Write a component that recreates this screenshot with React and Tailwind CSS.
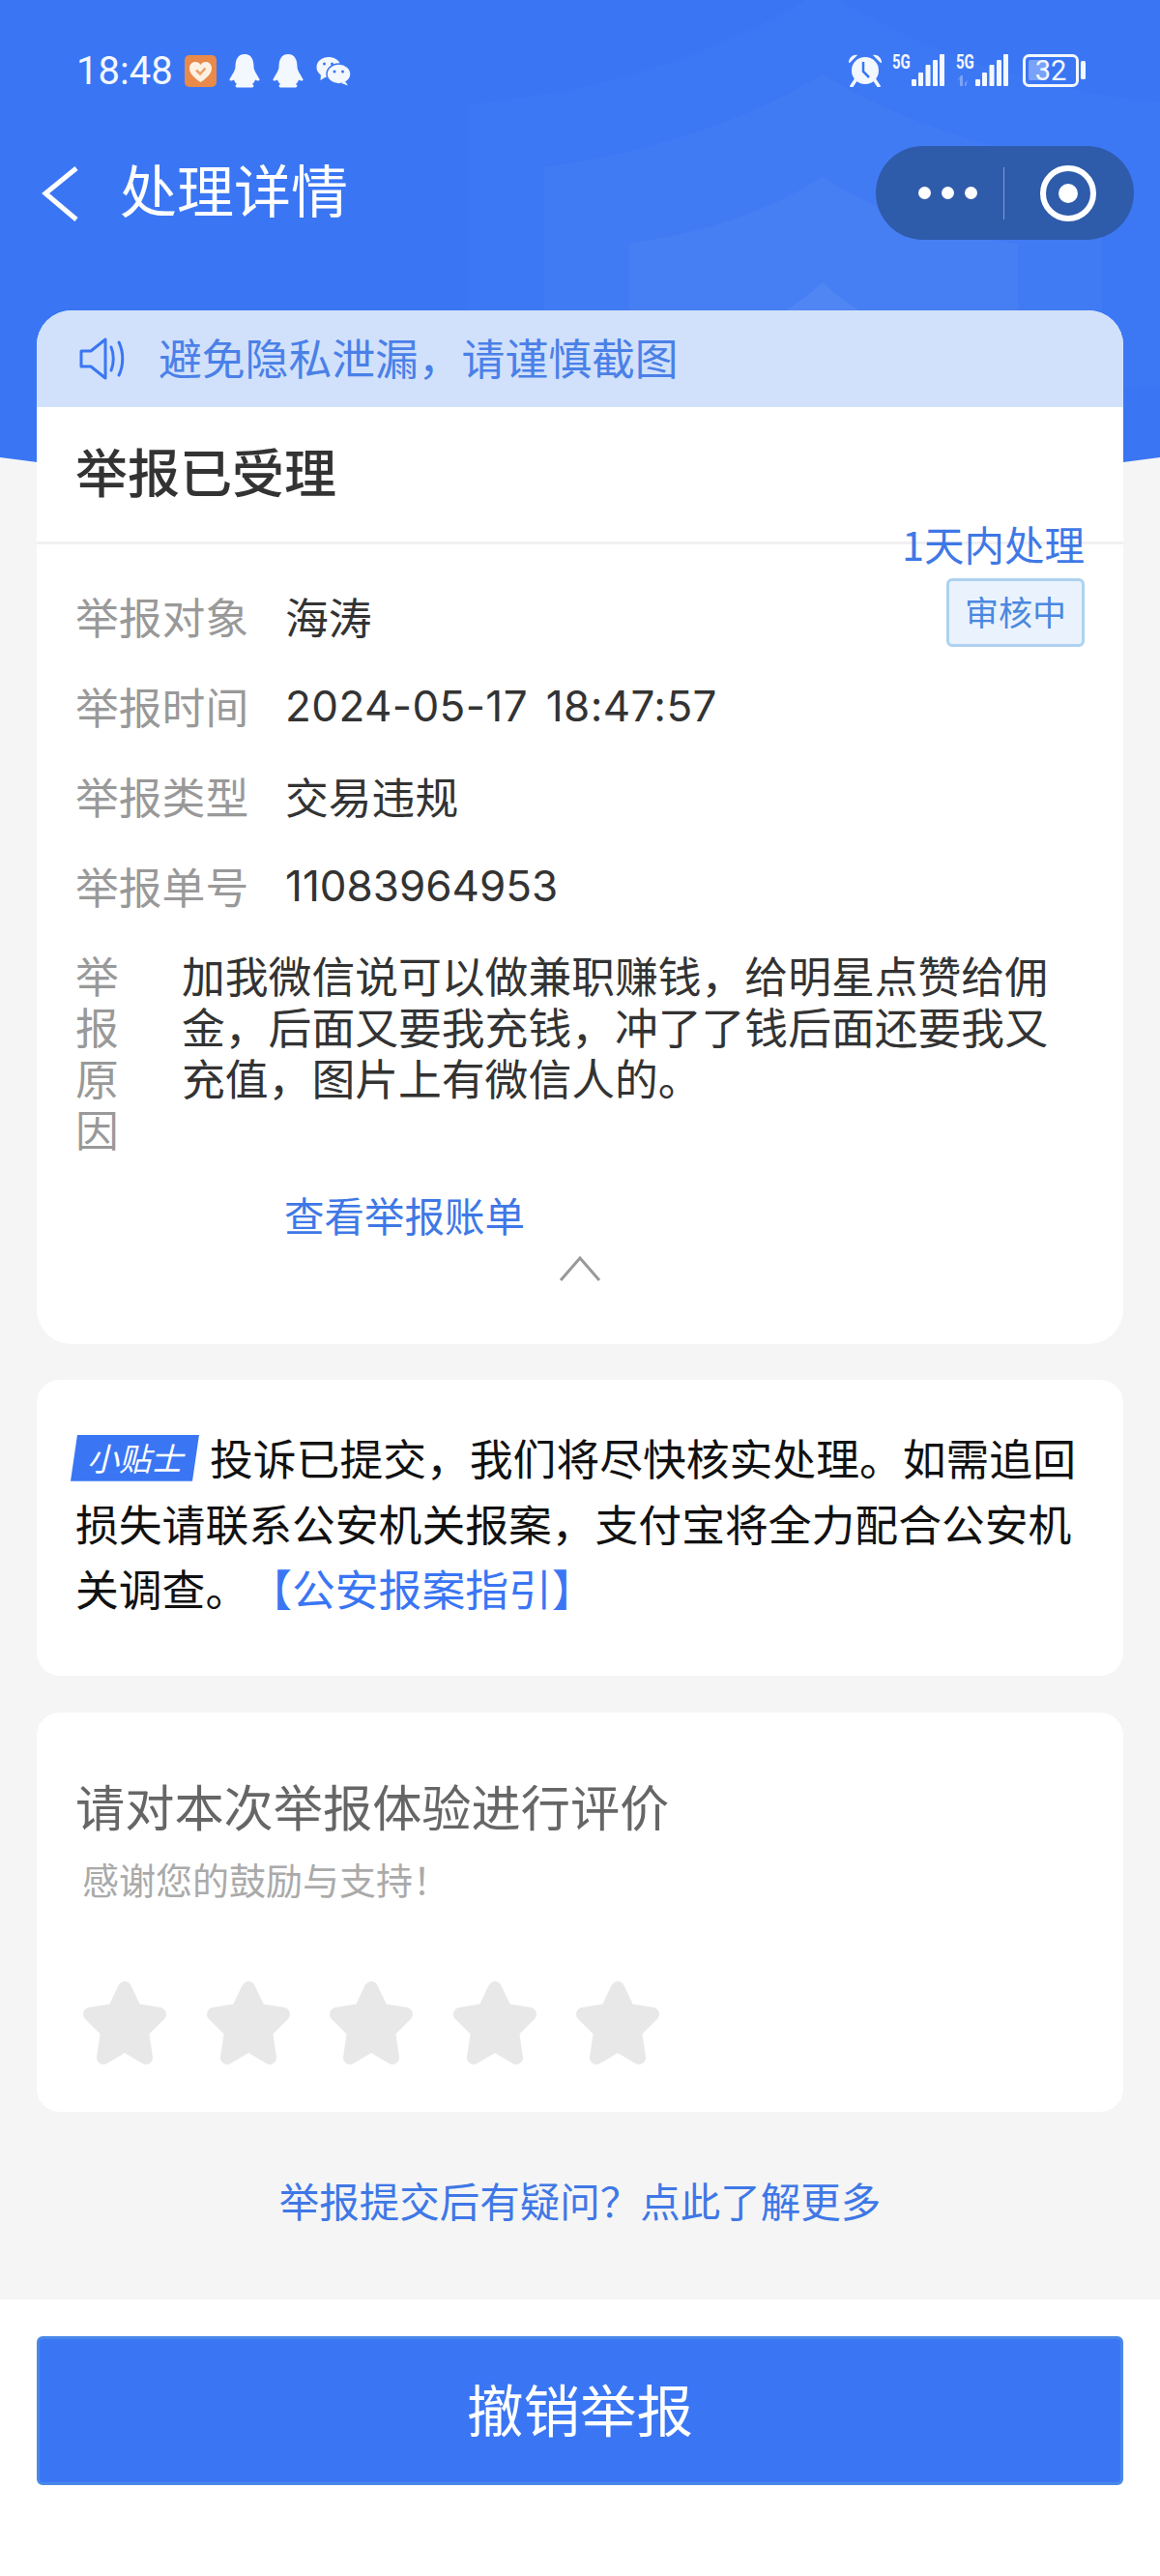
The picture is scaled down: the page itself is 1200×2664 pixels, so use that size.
import React from 'react';

const BLUE = '#3a76f4';

function HeaderBackground() {
  return (
    <svg className="absolute top-0 left-0" width="1200" height="560" viewBox="0 0 1200 560">
      <path d="M0 0H1200V473Q600 555 0 473Z" fill={BLUE} />
      <path d="M484 108Q690 90 851 -10Q1010 90 1218 108V400H484Z" fill="#ffffff" opacity="0.018" />
      <path d="M563 173Q730 150 851 77Q970 150 1140 173V400H563Z" fill="#ffffff" opacity="0.025" />
      <path d="M651 252Q770 235 851 183Q930 235 1053 252V400H651Z" fill="#ffffff" opacity="0.03" />
      <path d="M760 345Q810 330 851 292Q890 330 945 345Z" fill="#ffffff" opacity="0.06" />
    </svg>
  );
}

function HeartApp() {
  return (
    <svg width="33" height="33" viewBox="0 0 33 33">
      <rect width="33" height="33" rx="5" fill="#e88a4a" />
      <path d="M16.5 28C9 23 5 18.5 5 13.5C5 9.5 8 7 11 7C13.5 7 15.500 8 16.500 10C17.500 8 19.500 7 22 7C25 7 28 9.500 28 13.500C28 18.500 24 23 16.500 28Z" fill="#fdf1e4" />
      <path d="M12 15.500L16 19.500L21.500 13.500" fill="none" stroke="#eba266" strokeWidth="2.500" />
    </svg>
  );
}

function Penguin() {
  return (
    <svg width="32" height="35" viewBox="0 0 32 35">
      <path
        d="M16 0C23 0 25.500 6 25.500 13C25.500 17 29 21 31.500 26C32 28 29 28 27 26.500C26.500 28 25.500 30 24 31C26 32 26 34.500 23 34.500H9C6 34.500 6 32 8 31C6.500 30 5.500 28 5 26.500C3 28 0 28 0.500 26C3 21 6.500 17 6.500 13C6.500 6 9 0 16 0Z"
        fill="#f3f7fe"
      />
    </svg>
  );
}

function Wechat() {
  return (
    <svg width="36" height="30" viewBox="0 0 36 30">
      <ellipse cx="13" cy="10.500" rx="12.500" ry="10.500" fill="#f3f7fe" />
      <path d="M5 17L4.500 24L11 20Z" fill="#f3f7fe" />
      <ellipse cx="23.500" cy="17.500" rx="12.500" ry="10.500" fill="#f3f7fe" stroke={BLUE} strokeWidth="1.500" />
      <path d="M30 25L33 29.500L26 27Z" fill="#f3f7fe" />
      <circle cx="8.500" cy="7" r="1.500" fill={BLUE} />
      <circle cx="16.500" cy="7" r="1.500" fill={BLUE} />
      <circle cx="19" cy="15" r="1.500" fill={BLUE} />
      <circle cx="27.500" cy="15" r="1.500" fill={BLUE} />
    </svg>
  );
}

function Alarm() {
  return (
    <svg width="36" height="34" viewBox="0 0 36 34">
      <circle cx="18" cy="17" r="14" fill="#f3f7fe" />
      <path d="M1 9C1 3 6 0 10 1L2 9Z" fill="#f3f7fe" />
      <path d="M35 9C35 3 30 0 26 1L34 9Z" fill="#f3f7fe" />
      <path d="M8 27L4 33M28 27L32 33" stroke="#f3f7fe" strokeWidth="3.500" strokeLinecap="round" />
      <path d="M16 8V18L22 24" fill="none" stroke={BLUE} strokeWidth="2.500" />
    </svg>
  );
}

function Signal({ arrows }) {
  const bars = [
    [20, 26],
    [27, 19],
    [34.5, 11],
    [42, 6],
    [49, 0],
  ];
  return (
    <svg width="56" height="34" viewBox="0 0 56 34">
      <text transform="scale(1 1.3)" x="0" y="11.500" fill="#f3f7fe" fontSize="15" fontWeight="700" fontFamily="Roboto, sans-serif">
        5G
      </text>
      {bars.map(([x, y]) => (
        <rect key={x} x={x} y={y} width="5" height={33 - y} rx="1" fill="#f3f7fe" />
      ))}
      {arrows && (
        <g fill="#f3f7fe" opacity="0.35">
          <path d="M4 33V25L1 28L5 22H7V33Z" />
          <path d="M9 22V30L12 27L10 33H9Z" />
        </g>
      )}
    </svg>
  );
}

function Battery() {
  return (
    <svg width="65" height="34" viewBox="0 0 65 34">
      <rect x="1.500" y="1.500" width="55" height="31" rx="5" fill="none" stroke="#f3f7fe" strokeWidth="3" />
      <rect x="6" y="6" width="19" height="21" rx="2" fill="#f3f7fe" opacity="0.35" />
      <text x="29" y="27" textAnchor="middle" fill="#f3f7fe" fontSize="29" fontFamily="Roboto, sans-serif">
        32
      </text>
      <rect x="60" y="7" width="5" height="19" rx="1.500" fill="#f3f7fe" />
    </svg>
  );
}

function StatusBar() {
  return (
    <div className="h-[151px] pt-[56px] pl-[79px] pr-[77px] flex justify-between items-start">
      <div className="flex items-center gap-[13px]">
        <span className="mr-[-1px] text-[40px] leading-[34px] text-[#f3f7fe] font-['Roboto',sans-serif]">18:48</span>
        <HeartApp />
        <Penguin />
        <Penguin />
        <Wechat />
      </div>
      <div className="flex items-center gap-[10px]">
        <Alarm />
        <Signal />
        <Signal arrows />
        <div className="ml-[3px]">
          <Battery />
        </div>
      </div>
    </div>
  );
}

function NavBar() {
  return (
    <div className="h-[97px] pl-[43px] pr-[27px] flex justify-between items-center">
      <div className="flex items-center">
        <svg width="38" height="60" viewBox="0 0 38 60">
          <path d="M36 4L4 30L36 57" fill="none" stroke="#ffffff" strokeWidth="5" />
        </svg>
        <span className="ml-[43px] -mt-[9px] text-[59px] leading-[70px] text-white">处理详情</span>
      </div>
      <div className="w-[267px] h-[97px] rounded-full bg-[#2f5bab] flex items-center pl-[44px]">
        <div className="flex gap-[11px]">
          <span className="w-[13px] h-[13px] rounded-full bg-white"></span>
          <span className="w-[13px] h-[13px] rounded-full bg-white"></span>
          <span className="w-[13px] h-[13px] rounded-full bg-white"></span>
        </div>
        <span className="ml-[27px] w-px h-[54px] bg-white/40"></span>
        <span className="ml-[37px] w-[58px] h-[58px] rounded-full border-[6px] border-white flex items-center justify-center">
          <span className="w-[20px] h-[20px] rounded-full bg-white"></span>
        </span>
      </div>
    </div>
  );
}

function InfoRow({ label, children }) {
  return (
    <div className="h-[93px] flex items-center">
      <span className="w-[217px] text-[44.8px] leading-[60px] text-[#999999]">{label}</span>
      {children}
    </div>
  );
}

function Value({ children }) {
  return <span className="text-[44.8px] leading-[60px] text-[#333333]">{children}</span>;
}

function NumberValue({ children }) {
  return <span className="text-[44px] leading-[60px] text-[#333333] font-['Inter',sans-serif]">{children}</span>;
}

function DetailCard() {
  return (
    <div className="relative mx-[38px] h-[1069px] rounded-[36px] bg-white overflow-hidden">
      <div className="h-[100px] bg-[#d1e1fb] flex items-center pl-[44px]">
        <svg width="48" height="44" viewBox="0 0 48 44">
          <path d="M2 14H12L27 2V42L12 30H2Z" fill="none" stroke={BLUE} strokeWidth="3" strokeLinejoin="round" />
          <path d="M33 10C36 17 36 27 33 34" fill="none" stroke={BLUE} strokeWidth="3" strokeLinecap="round" />
          <path d="M41 5C46 15 46 29 41 39" fill="none" stroke={BLUE} strokeWidth="3" strokeLinecap="round" />
        </svg>
        <span className="ml-[34px] -mt-[4px] text-[44.8px] leading-[60px] text-[#4a80e8]">避免隐私泄漏，请谨慎截图</span>
      </div>
      <div className="h-[142px] pl-[40px] pb-[8px] flex items-center border-b-[3px] border-[#f1f1f1]">
        <span className="text-[54px] leading-[70px] font-medium text-[#333333]">举报已受理</span>
      </div>

      <div className="absolute top-[216px] right-[40px] flex flex-col items-end">
        <span className="text-[41.5px] leading-[50px] text-[#3f78e6]">1天内处理</span>
        <span className="mt-[11px] w-[143px] h-[71px] pb-[3px] rounded-[6px] border-[3px] border-[#aed2f0] bg-[#eaf3fd] flex items-center justify-center text-[35px] text-[#4a88e0]">
          审核中
        </span>
      </div>

      <div className="pt-[27px] px-[40px]">
        <InfoRow label="举报对象">
          <Value>海涛</Value>
        </InfoRow>
        <InfoRow label="举报时间">
          <span className="text-[44px] leading-[60px] text-[#333333] font-['Inter',sans-serif] tracking-[0.4px] [word-spacing:6px]">2024-05-17 18:47:57</span>
        </InfoRow>
        <InfoRow label="举报类型">
          <Value>交易违规</Value>
        </InfoRow>
        <InfoRow label="举报单号">
          <NumberValue>11083964953</NumberValue>
        </InfoRow>

        <div className="mt-[19px] flex">
          <span className="w-[45px] text-[44.8px] leading-[53px] text-[#999999]">举报原因</span>
          <p className="ml-[65px] w-[905px] text-[44.8px] leading-[53px] text-[#333333]">
            加我微信说可以做兼职赚钱，给明星点赞给佣金，后面又要我充钱，冲了了钱后面还要我又充值，图片上有微信人的。
          </p>
        </div>

        <div className="mt-[33px] pl-[216px] text-[41.5px] leading-[60px] text-[#3f78e6]">查看举报账单</div>
        <div className="mt-[12px] flex justify-center">
          <svg width="44" height="28" viewBox="0 0 44 28">
            <path d="M2 26L22 3L42 26" fill="none" stroke="#999999" strokeWidth="3" />
          </svg>
        </div>
      </div>
    </div>
  );
}

function TipCard() {
  return (
    <div className="mt-[37px] mx-[38px] h-[306px] rounded-[24px] bg-white pt-[46px] pl-[40px] pr-[38px]">
      <p className="text-[44.8px] leading-[67.5px] text-[#111111] [text-spacing-trim:space-all]">
        <span className="inline-flex items-center justify-center -ml-[5px] mr-[11px] w-[133px] h-[48px] align-[5px] bg-[#3a76f4] text-[33px] italic text-white [clip-path:polygon(7px_0,100%_0,126px_100%,0_100%)]">
          小贴士
        </span>
        投诉已提交，我们将尽快核实处理。如需追回损失请联系公安机关报案，支付宝将全力配合公安机关调查。
        <span className="text-[#3a76f4]">【公安报案指引】</span>
      </p>
    </div>
  );
}

function Star() {
  return (
    <svg width="88" height="88" viewBox="0 0 88 88">
      <path
        d="M44 8L55 31L80 35L62 53L66 80L44 67L22 80L26 53L8 35L33 31Z"
        fill="#e8e8e8"
        stroke="#e8e8e8"
        strokeWidth="14"
        strokeLinejoin="round"
      />
    </svg>
  );
}

function RateCard() {
  return (
    <div className="mt-[38px] mx-[38px] h-[413px] rounded-[24px] bg-white pt-[66px] pl-[40px]">
      <div className="text-[51.2px] leading-[60px] text-[#666666]">请对本次举报体验进行评价</div>
      <div className="mt-[24px] pl-[7px] text-[38px] leading-[44px] text-[#aaaaaa]">感谢您的鼓励与支持！</div>
      <div className="mt-[83px] pl-[7px] flex gap-[39.5px]">
        <Star />
        <Star />
        <Star />
        <Star />
        <Star />
      </div>
    </div>
  );
}

export default function App() {
  return (
    <div className="relative w-full h-[2664px] bg-[#f5f5f5] flex flex-col overflow-hidden font-['Noto_Sans_CJK_SC','Noto_Sans',sans-serif]">
      <HeaderBackground />
      <div className="relative flex flex-col flex-1">
        <StatusBar />
        <NavBar />
        <div className="h-[73px]"></div>
        <DetailCard />
        <TipCard />
        <RateCard />
        <div className="mt-[61px] text-center text-[41.5px] leading-[60px] text-[#3f78e6]">举报提交后有疑问？点此了解更多</div>
        <div className="mt-auto h-[286px] bg-white px-[38px] pt-[38px]">
          <button className="w-full h-[154px] pb-[6px] rounded-[6px] border-[3px] border-[#4a88e8] bg-[#3a76f4] text-[58.5px] text-white">
            撤销举报
          </button>
        </div>
      </div>
    </div>
  );
}
